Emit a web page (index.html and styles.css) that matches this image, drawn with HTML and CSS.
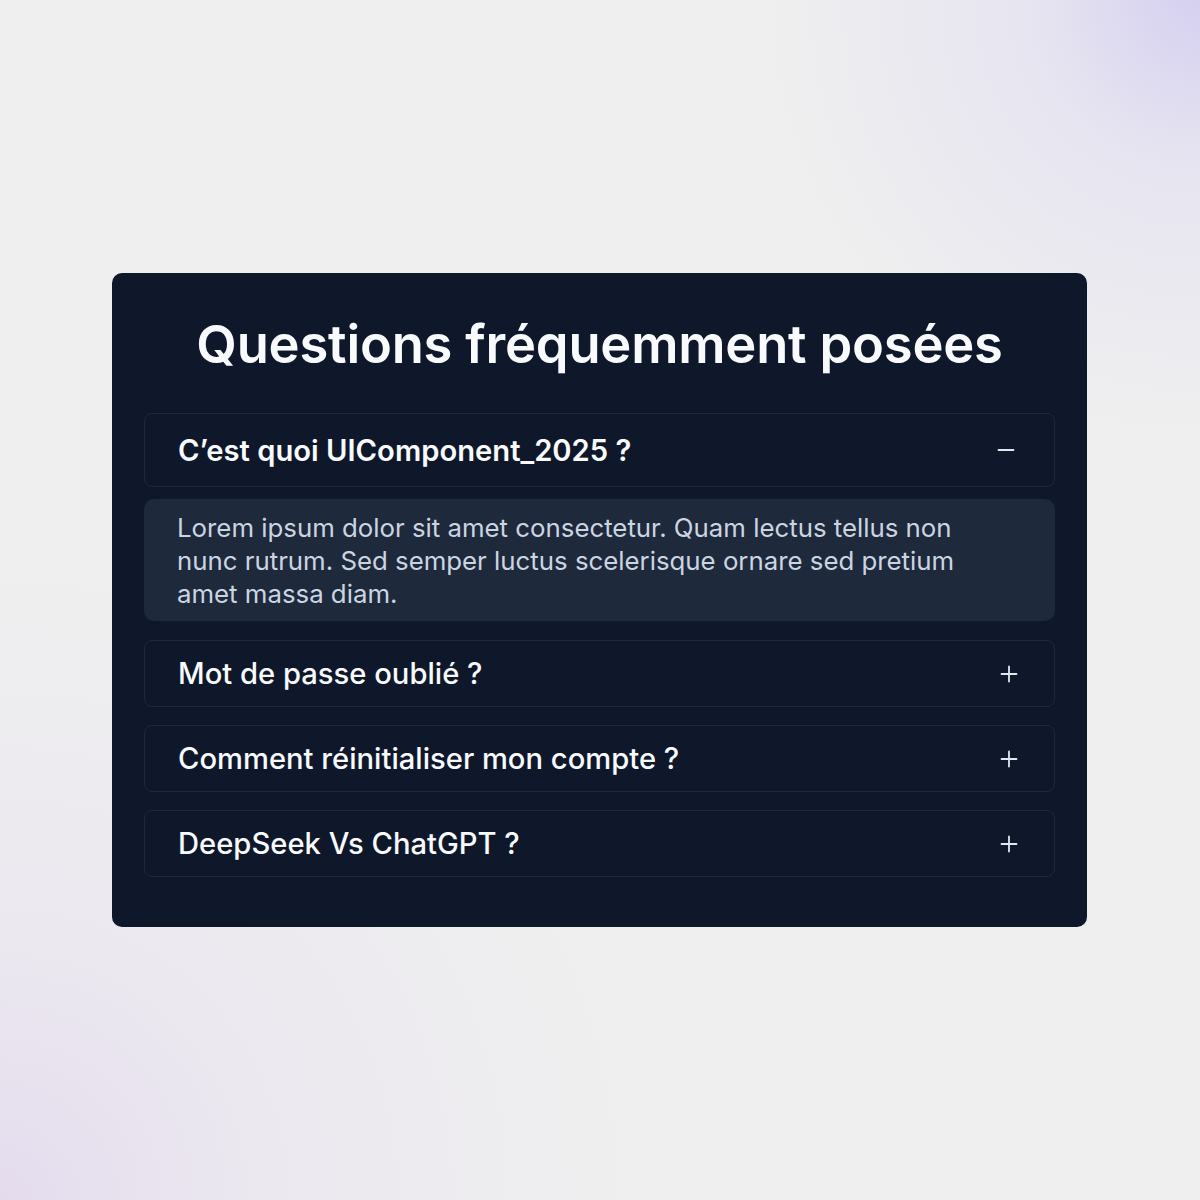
FILE: index.html
```html
<!DOCTYPE html>
<html lang="fr">
<head>
<meta charset="utf-8">
<title>FAQ</title>
<link rel="stylesheet" href="styles.css">
</head>
<body>
<main class="page">
  <section class="card">
    <h1 class="title">Questions fréquemment posées</h1>
    <div class="faq-list">
      <div class="item open">
        <div class="question">
          <span class="q-text">C’est quoi UIComponent_2025 ?</span>
          <svg class="icon" width="18" height="18" viewBox="0 0 18 18"><path d="M1.5 9H16.5" stroke="#e2e8f0" stroke-width="1.8" stroke-linecap="round"/></svg>
        </div>
        <div class="answer">Lorem ipsum dolor sit amet consectetur. Quam lectus tellus non nunc rutrum. Sed semper luctus scelerisque ornare sed pretium amet massa diam.</div>
      </div>
      <div class="item">
        <div class="question">
          <span class="q-text">Mot de passe oublié ?</span>
          <svg class="icon" width="18" height="18" viewBox="0 0 18 18"><path d="M1.5 9H16.5M9 1.5V16.5" stroke="#e2e8f0" stroke-width="1.8" stroke-linecap="round"/></svg>
        </div>
      </div>
      <div class="item">
        <div class="question">
          <span class="q-text">Comment réinitialiser mon compte ?</span>
          <svg class="icon" width="18" height="18" viewBox="0 0 18 18"><path d="M1.5 9H16.5M9 1.5V16.5" stroke="#e2e8f0" stroke-width="1.8" stroke-linecap="round"/></svg>
        </div>
      </div>
      <div class="item">
        <div class="question">
          <span class="q-text">DeepSeek Vs ChatGPT ?</span>
          <svg class="icon" width="18" height="18" viewBox="0 0 18 18"><path d="M1.5 9H16.5M9 1.5V16.5" stroke="#e2e8f0" stroke-width="1.8" stroke-linecap="round"/></svg>
        </div>
      </div>
    </div>
  </section>
</main>
</body>
</html>
```

FILE: styles.css
```css
* { box-sizing: border-box; }
html, body { margin: 0; padding: 0; }
body {
  font-family: Inter, "Noto Sans", "Liberation Sans", sans-serif;
  background-color: #efefef;
  background-image:
    radial-gradient(circle at 100% 0%, rgba(214, 208, 240, 1) 0%, rgba(224, 220, 242, 0.55) 10%, rgba(239, 239, 239, 0) 26%),
    radial-gradient(circle at 0% 100%, rgba(228, 220, 238, 1) 0%, rgba(232, 226, 240, 0.55) 15%, rgba(239, 239, 239, 0) 38%);
  width: 1200px;
  height: 1200px;
}
.page {
  width: 1200px;
  height: 1200px;
  display: flex;
  align-items: center;
  justify-content: center;
}
.card {
  width: 975px;
  height: 654px;
  margin-left: -1px;
  background: #0f172a;
  border-radius: 10px;
  padding: 30px 32px 50px;
  display: flex;
  flex-direction: column;
}
.title {
  margin: 0 0 28px;
  text-align: center;
  color: #f8fafc;
  font-size: 52.5px;
  font-weight: 600;
  line-height: 82px;
  letter-spacing: -0.2px;
}
.faq-list {
  display: flex;
  flex-direction: column;
  gap: 18px;
}
.question {
  height: 67px;
  border: 1px solid #1e293b;
  border-radius: 8px;
  padding: 0 36px 0 33px;
  display: flex;
  align-items: center;
  justify-content: space-between;
}
.q-text {
  color: #f8fafc;
  font-size: 29.2px;
  font-weight: 500;
}
.item.open .question { height: 74px; padding-right: 39px; }
.item.open .q-text { font-weight: 600; }
.answer {
  margin-top: 12px;
  margin-bottom: 1px;
  background: #1e293b;
  border-radius: 10px;
  padding: 12px 80px 12px 33px;
  color: #cbd5e1;
  font-size: 25.8px;
  line-height: 33px;
  height: 122px;
}
.icon { display: block; }
```
